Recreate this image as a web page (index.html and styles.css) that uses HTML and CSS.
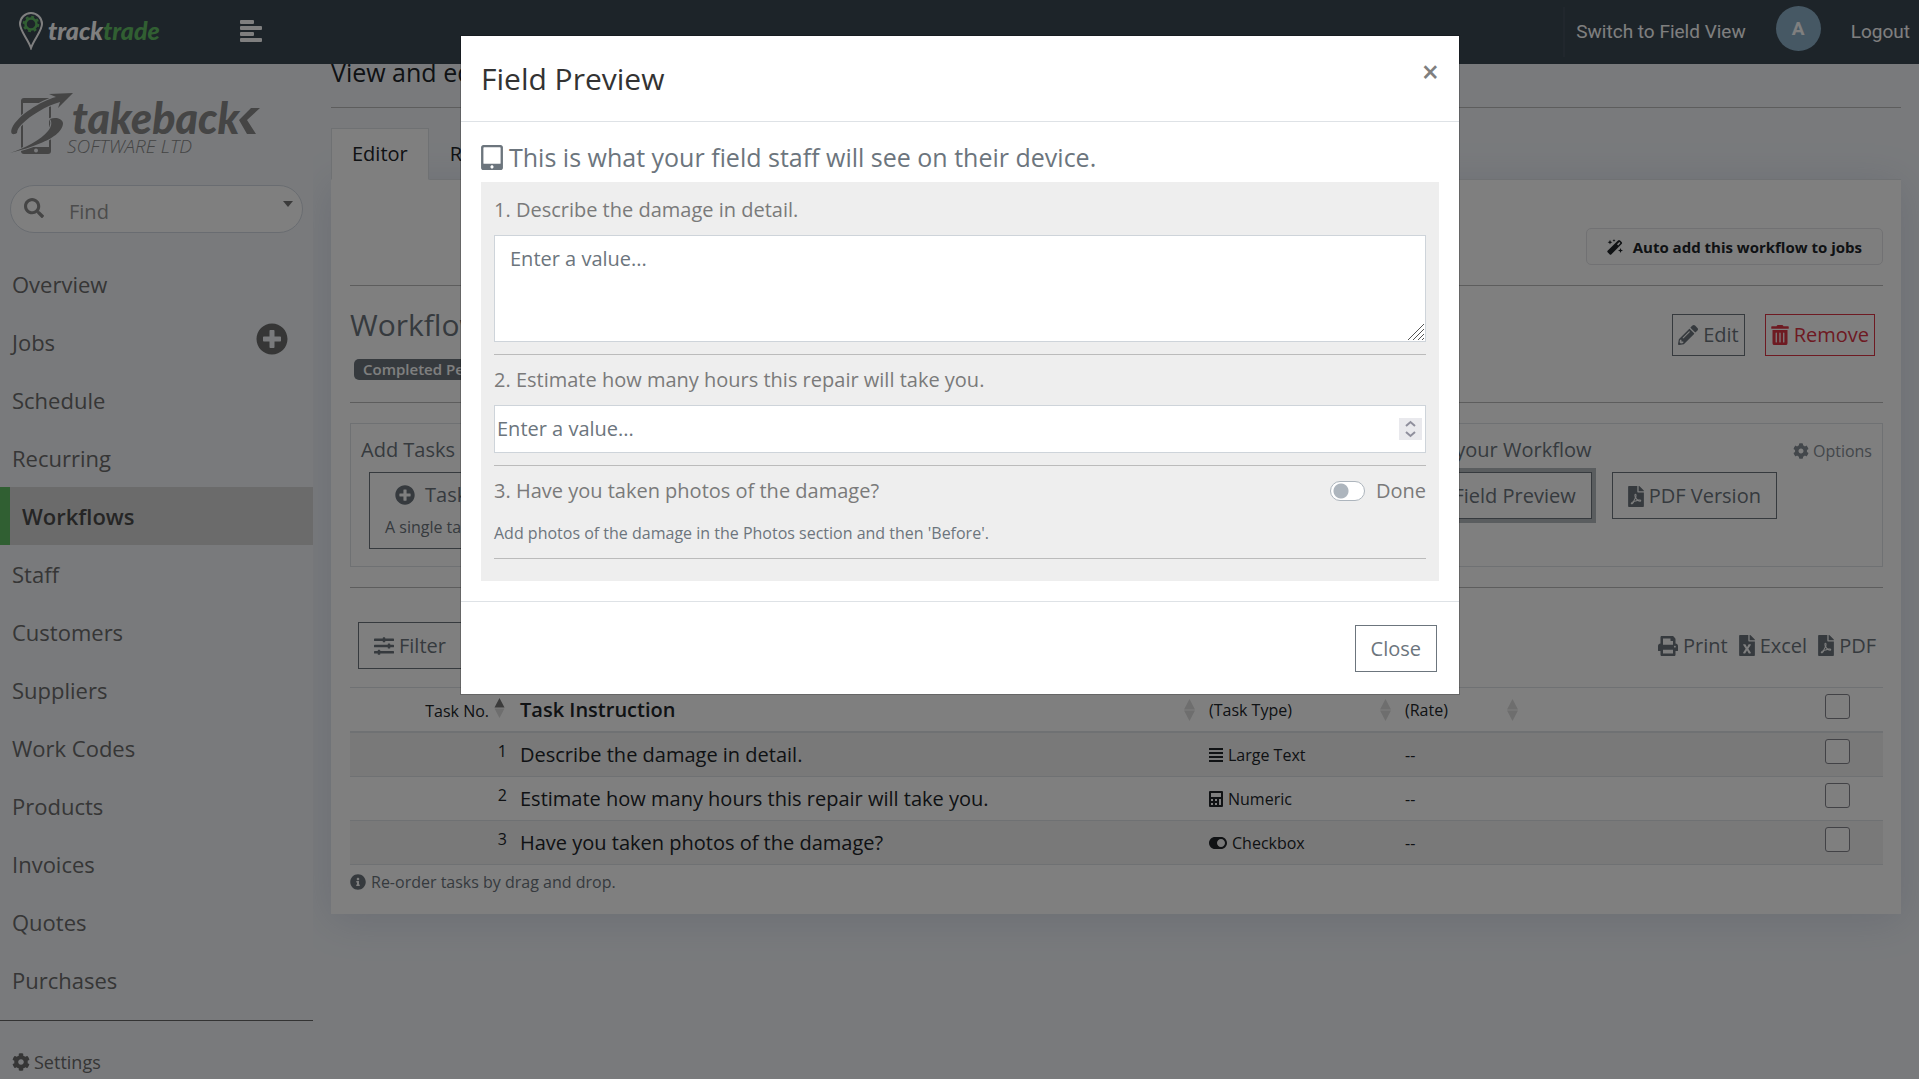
FILE: index.html
```html
<!DOCTYPE html>
<html lang="en">
  <head>
    <meta charset="UTF-8" />
    <meta name="viewport" content="width=device-width, initial-scale=1.0" />
    <title>Workflow - Tracktrade</title>
    <link rel="stylesheet" href="styles.css">
  </head>
  <body>
    <!-- Icon set -->
    <svg class="sprite" aria-hidden="true">
      <symbol id="i-search" viewBox="0 0 512 512"><path d="M505 442.7L405.3 343c-4.5-4.5-10.6-7-17-7H372c27.6-35.3 44-79.7 44-128C416 93.1 322.9 0 208 0S0 93.1 0 208s93.1 208 208 208c48.3 0 92.7-16.4 128-44v16.3c0 6.4 2.5 12.5 7 17l99.7 99.7c9.4 9.4 24.6 9.4 33.9 0l28.3-28.3c9.4-9.4 9.4-24.6.1-34zM208 336c-70.7 0-128-57.2-128-128 0-70.7 57.2-128 128-128 70.7 0 128 57.2 128 128 0 70.7-57.2 128-128 128z"/></symbol>
      <symbol id="i-plus" viewBox="0 0 512 512"><path d="M256 8C119 8 8 119 8 256s111 248 248 248 248-111 248-248S393 8 256 8zm144 276c0 6.600-5.400 12-12 12h-92v92c0 6.600-5.400 12-12 12h-56c-6.600 0-12-5.400-12-12v-92h-92c-6.600 0-12-5.400-12-12v-56c0-6.600 5.400-12 12-12h92v-92c0-6.600 5.400-12 12-12h56c6.600 0 12 5.400 12 12v92h92c6.600 0 12 5.400 12 12v56z"/></symbol>
      <symbol id="i-cog" viewBox="0 0 512 512"><path d="M487.400 315.700l-42.600-24.600c4.300-23.200 4.300-47 0-70.200l42.600-24.600c4.900-2.800 7.100-8.600 5.500-14-11.100-35.600-30-67.800-54.700-94.600-3.800-4.100-10-5.100-14.800-2.300L380.800 110c-17.900-15.400-38.500-27.300-60.800-35.100V25.800c0-5.600-3.900-10.500-9.400-11.700-36.700-8.200-74.300-7.800-109.200 0-5.500 1.200-9.400 6.100-9.400 11.700V75c-22.200 7.900-42.800 19.800-60.800 35.100L88.700 85.500c-4.900-2.800-11-1.900-14.800 2.300-24.700 26.700-43.600 58.900-54.700 94.600-1.700 5.400.6 11.200 5.500 14L67.300 221c-4.300 23.200-4.300 47 0 70.200l-42.600 24.600c-4.900 2.800-7.100 8.600-5.500 14 11.100 35.600 30 67.800 54.700 94.600 3.800 4.100 10 5.100 14.800 2.300l42.600-24.600c17.900 15.400 38.500 27.300 60.800 35.100v49.200c0 5.600 3.900 10.500 9.400 11.700 36.700 8.200 74.300 7.800 109.200 0 5.500-1.200 9.400-6.100 9.400-11.700v-49.200c22.200-7.900 42.800-19.800 60.800-35.100l42.600 24.600c4.900 2.800 11 1.900 14.800-2.300 24.700-26.700 43.600-58.900 54.700-94.600 1.500-5.500-.7-11.300-5.600-14.100zM256 336c-44.100 0-80-35.900-80-80s35.900-80 80-80 80 35.900 80 80-35.900 80-80 80z"/></symbol>
      <symbol id="i-pencil" viewBox="0 0 512 512"><path d="M497.900 142.100l-46.100 46.100c-4.700 4.700-12.300 4.700-17 0l-111-111c-4.700-4.700-4.700-12.300 0-17l46.100-46.100c18.700-18.700 49.100-18.700 67.900 0l60.100 60.100c18.800 18.700 18.800 49.100 0 67.900zM284.200 99.800L21.600 362.400.4 483.900c-2.900 16.400 11.400 30.600 27.800 27.800l121.500-21.300 262.600-262.600c4.700-4.700 4.700-12.300 0-17l-111-111c-4.800-4.700-12.400-4.700-17.100 0zM124.100 339.900c-5.500-5.500-5.500-14.300 0-19.800l154-154c5.500-5.500 14.300-5.500 19.800 0s5.500 14.300 0 19.800l-154 154c-5.500 5.500-14.300 5.500-19.800 0zM88 424h48v36.300l-64.500 11.300-31.100-31.100L51.700 376H88v48z"/></symbol>
      <symbol id="i-trash" viewBox="0 0 448 512"><path d="M32 464a48 48 0 0 0 48 48h288a48 48 0 0 0 48-48V128H32zm272-256a16 16 0 0 1 32 0v224a16 16 0 0 1-32 0zm-96 0a16 16 0 0 1 32 0v224a16 16 0 0 1-32 0zm-96 0a16 16 0 0 1 32 0v224a16 16 0 0 1-32 0zM432 32H312l-9.400-18.700A24 24 0 0 0 281.100 0H166.800a23.720 23.720 0 0 0-21.400 13.300L136 32H16A16 16 0 0 0 0 48v32a16 16 0 0 0 16 16h416a16 16 0 0 0 16-16V48a16 16 0 0 0-16-16z"/></symbol>
      <symbol id="i-pdf" viewBox="0 0 384 512"><path d="M181.900 256.100c-5-16-4.900-46.900-2-46.900 8.400 0 7.600 36.900 2 46.900zm-1.700 47.200c-7.700 20.200-17.300 43.300-28.400 62.700 18.300-7 39-17.200 62.900-21.900-12.700-9.600-24.900-23.400-34.500-40.800zM86.100 428.100c0 .8 13.200-5.400 34.900-40.200-6.700 6.300-29.100 24.500-34.900 40.200zM248 160h136v328c0 13.300-10.700 24-24 24H24c-13.300 0-24-10.700-24-24V24C0 10.700 10.700 0 24 0h200v136c0 13.200 10.800 24 24 24zm-8 171.800c-20-12.200-33.300-29-42.700-53.800 4.500-18.500 11.600-46.600 6.200-64.200-4.700-29.400-42.400-26.500-47.800-6.800-5 18.300-.4 44.100 8.100 77-11.600 27.600-28.700 64.600-40.800 85.800-.1 0-.1.1-.2.1-27.100 13.900-73.600 44.500-54.500 68 5.600 6.900 16 10 21.500 10 17.900 0 35.700-18 61.100-61.800 25.800-8.500 54.100-19.100 79-23.200 21.700 11.800 47.100 19.500 64 19.500 29.200 0 31.200-32 19.700-43.400-13.900-13.600-54.300-9.700-73.600-7.200zM377 105L279 7c-4.500-4.500-10.600-7-17-7h-6v128h128v-6.100c0-6.300-2.500-12.400-7-16.900zm-74.100 255.300c4.100-2.700-2.500-11.900-42.800-9 37.100 15.800 42.800 9 42.800 9z"/></symbol>
      <symbol id="i-excel" viewBox="0 0 384 512"><path d="M224 136V0H24C10.700 0 0 10.700 0 24v464c0 13.300 10.700 24 24 24h336c13.300 0 24-10.700 24-24V160H248c-13.200 0-24-10.800-24-24zm60.100 106.500L224 336l60.100 93.500c5.100 8-.6 18.500-10.100 18.500h-34.900c-4.400 0-8.500-2.400-10.600-6.300C208.900 405.500 192 373 192 373c-6.400 14.800-10 20-36.600 68.800-2.100 3.900-6.100 6.300-10.500 6.300H110c-9.500 0-15.200-10.500-10.100-18.500l60.300-93.500-60.300-93.500c-5.200-8 .6-18.500 10.100-18.500h34.800c4.400 0 8.500 2.400 10.600 6.300 26.100 48.800 20 33.600 36.600 68.500 0 0 6.100-11.700 36.600-68.500 2.100-3.900 6.200-6.300 10.600-6.300H274c9.500-.1 15.200 10.400 10.100 18.400zM384 121.900v6.100H256V0h6.100c6.400 0 12.500 2.500 17 7l97.900 98c4.500 4.500 7 10.600 7 16.900z"/></symbol>
      <symbol id="i-print" viewBox="0 0 512 512"><path d="M448 192V77.250c0-8.490-3.370-16.620-9.370-22.630L393.370 9.370c-6-6-14.140-9.370-22.630-9.370H96C78.330 0 64 14.330 64 32v160c-35.350 0-64 28.650-64 64v112c0 8.840 7.160 16 16 16h48v96c0 17.670 14.330 32 32 32h320c17.670 0 32-14.330 32-32v-96h48c8.840 0 16-7.160 16-16V256c0-35.350-28.650-64-64-64zm-64 256H128v-96h256v96zm0-224H128V64h192v48c0 8.840 7.160 16 16 16h48v96zm48 72c-13.250 0-24-10.750-24-24 0-13.260 10.750-24 24-24s24 10.740 24 24c0 13.250-10.750 24-24 24z"/></symbol>
      <symbol id="i-sliders" viewBox="0 0 512 512"><path d="M496 384H160v-16c0-8.800-7.200-16-16-16h-32c-8.800 0-16 7.200-16 16v16H16c-8.800 0-16 7.200-16 16v32c0 8.800 7.200 16 16 16h80v16c0 8.800 7.200 16 16 16h32c8.800 0 16-7.200 16-16v-16h336c8.800 0 16-7.200 16-16v-32c0-8.800-7.200-16-16-16zm0-160h-80v-16c0-8.800-7.200-16-16-16h-32c-8.800 0-16 7.200-16 16v16H16c-8.800 0-16 7.200-16 16v32c0 8.800 7.200 16 16 16h336v16c0 8.800 7.200 16 16 16h32c8.800 0 16-7.200 16-16v-16h80c8.800 0 16-7.200 16-16v-32c0-8.800-7.200-16-16-16zm0-160H288V48c0-8.800-7.200-16-16-16h-32c-8.800 0-16 7.200-16 16v16H16C7.200 64 0 71.200 0 80v32c0 8.800 7.200 16 16 16h208v16c0 8.800 7.200 16 16 16h32c8.800 0 16-7.200 16-16v-16h208c8.800 0 16-7.200 16-16V80c0-8.800-7.200-16-16-16z"/></symbol>
      <symbol id="i-info" viewBox="0 0 512 512"><path d="M256 8C119 8 8 119 8 256c0 137 111 248 248 248s248-111 248-248C504 119 393 8 256 8zm0 110c23.200 0 42 18.800 42 42s-18.800 42-42 42-42-18.800-42-42 18.800-42 42-42zm56 254c0 6.600-5.400 12-12 12h-88c-6.600 0-12-5.400-12-12v-24c0-6.600 5.400-12 12-12h12v-64h-12c-6.600 0-12-5.400-12-12v-24c0-6.600 5.400-12 12-12h64c6.600 0 12 5.400 12 12v100h12c6.600 0 12 5.400 12 12v24z"/></symbol>
      <symbol id="i-tablet" viewBox="0 0 448 512"><path d="M400 0H48C21.500 0 0 21.500 0 48v416c0 26.500 21.500 48 48 48h352c26.500 0 48-21.500 48-48V48c0-26.500-21.500-48-48-48zM224 480c-17.700 0-32-14.300-32-32s14.300-32 32-32 32 14.300 32 32-14.300 32-32 32zm176-108c0 6.600-5.400 12-12 12H60c-6.600 0-12-5.400-12-12V60c0-6.600 5.400-12 12-12h328c6.600 0 12 5.400 12 12v312z"/></symbol>
      <symbol id="i-toggle" viewBox="0 0 576 512"><path d="M384 64H192C86 64 0 150 0 256s86 192 192 192h192c106 0 192-86 192-192S490 64 384 64zm0 320c-70.800 0-128-57.300-128-128 0-70.800 57.300-128 128-128 70.800 0 128 57.300 128 128 0 70.800-57.300 128-128 128z"/></symbol>
      <symbol id="i-justify" viewBox="0 0 14 16"><path d="M0 1h14v2H0zM0 5h14v2H0zM0 9h14v2H0zM0 13h14v2H0z"/></symbol>
      <symbol id="i-calc" viewBox="0 0 14 16"><path fill-rule="evenodd" d="M1 0h12a1 1 0 0 1 1 1v14a1 1 0 0 1-1 1H1a1 1 0 0 1-1-1V1a1 1 0 0 1 1-1zM2 2v4h10V2zM2 8v2h2V8zM6 8v2h2V8zM10 8v6h2V8zM2 12v2h2v-2zM6 12v2h2v-2z"/></symbol>
      <symbol id="i-left" viewBox="0 0 22 22"><path d="M1 0h12a1 1 0 0 1 1 1v2a1 1 0 0 1-1 1H1a1 1 0 0 1-1-1V1a1 1 0 0 1 1-1zM1 6h20a1 1 0 0 1 1 1v2a1 1 0 0 1-1 1H1a1 1 0 0 1-1-1V7a1 1 0 0 1 1-1zM1 12h12a1 1 0 0 1 1 1v2a1 1 0 0 1-1 1H1a1 1 0 0 1-1-1v-2a1 1 0 0 1 1-1zM1 18h20a1 1 0 0 1 1 1v2a1 1 0 0 1-1 1H1a1 1 0 0 1-1-1v-2a1 1 0 0 1 1-1z"/></symbol>
      <symbol id="i-magic" viewBox="0 0 16 16"><path fill-rule="evenodd" d="M.6 11.800L11 1.400a1.500 1.500 0 0 1 2.100 0l1.500 1.500a1.500 1.500 0 0 1 0 2.100L4.200 15.400a1 1 0 0 1-1.400 0L.6 13.200a1 1 0 0 1 0-1.400zM10 5.200l1.200 1.200 2.200-2.500-1-1zM3 .8l.7 1.700 1.700.7-1.700.7L3 5.600l-.7-1.700L.6 3.200l1.700-.7zM13.500 9l.7 1.800 1.800.7-1.800.7-.7 1.800-.7-1.800-1.800-.7 1.800-.7zM7 0l.4 1.100 1.100.4-1.100.4L7 3l-.4-1.100-1.100-.4 1.100-.4z"/></symbol>
      <symbol id="i-sort" viewBox="0 0 11 22"><path class="sort-up" d="M5.500 0L11 10.500H0z"/><path class="sort-down" d="M0 11.500h11L5.500 22z"/></symbol>
    </svg>

    <header class="navbar">
      <a class="brand" href="#" aria-label="tracktrade">
        <svg class="brand-pin" viewBox="0 0 24 38">
          <path d="M12 36C9 27 1 19 1 12a11 11 0 0 1 22 0c0 7-8 15-11 24z" fill="none" stroke="#fff" stroke-width="2"/>
          <circle cx="12" cy="12" r="5.500" fill="none" stroke="#62be65" stroke-width="2.500"/>
          <circle cx="12" cy="12" r="7.300" fill="none" stroke="#62be65" stroke-width="2" stroke-dasharray="2.900 2.830"/>
        </svg>
        <span class="brand-name">track<span class="brand-green">trade</span></span>
      </a>
      <button class="menu-toggle" type="button" aria-label="Toggle menu"><svg class="icon"><use href="#i-left"/></svg></button>
      <nav class="navbar-right">
        <a class="switch-view" href="#">Switch to Field View</a>
        <span class="avatar">A</span>
        <a href="#">Logout</a>
      </nav>
    </header>

    <div class="layout">
      <aside class="sidebar">
        <svg class="company-logo" viewBox="0 0 252 64" role="img" aria-label="takeback software ltd">
          <!-- phone -->
          <path fill-rule="evenodd" d="M14 6h24a3 3 0 0 1 3 3v50a3 3 0 0 1-3 3H14a3 3 0 0 1-3-3V9a3 3 0 0 1 3-3zM13 11v44h26V11z"/>
          <circle class="logo-gap" cx="26" cy="58.500" r="2"/>
          <!-- arrows round it -->
          <path class="logo-edge" d="M63 1L39 2l7 3C31 9 8 23 2 36c-2 5 0 8 5 5 0-3 2-6 5-9 9-9 24-18 38-22l-2 6z"/>
          <path class="logo-edge" d="M0 61c15-5 31-13 38-22 4-5 4-9 2-12 5-2 12-1 13 4 0 9-12 16-22 20-9 4-20 7-31 10z"/>
          <text class="logo-name" x="62" y="42">takeback</text>
          <path d="M241 16h9L237 28l9 14h-9l-8-14z"/>
          <text class="logo-sub" x="57" y="61">SOFTWARE LTD</text>
        </svg>
        <div class="find">
          <svg class="icon icon-20"><use href="#i-search"/></svg>
          <input type="text" placeholder="Find" aria-label="Find">
          <span class="caret"></span>
        </div>
        <nav class="side-nav">
          <a href="#">Overview</a>
          <a href="#">Jobs <svg class="icon add-job"><use href="#i-plus"/></svg></a>
          <a href="#">Schedule</a>
          <a href="#">Recurring</a>
          <a href="#" class="active">Workflows</a>
          <a href="#">Staff</a>
          <a href="#">Customers</a>
          <a href="#">Suppliers</a>
          <a href="#">Work Codes</a>
          <a href="#">Products</a>
          <a href="#">Invoices</a>
          <a href="#">Quotes</a>
          <a href="#">Purchases</a>
        </nav>
        <a class="settings" href="#"><svg class="icon icon-18"><use href="#i-cog"/></svg>Settings</a>
      </aside>

      <main class="main">
        <h1 class="page-title">View and edit your workflow</h1>
        <hr>
        <div class="tabs">
          <a class="tab active" href="#">Editor</a>
          <a class="tab" href="#">Rules</a>
        </div>
        <section class="card">
          <div class="row-end">
            <button class="btn-auto" type="button"><svg class="icon icon-16"><use href="#i-magic"/></svg>Auto add this workflow to jobs</button>
          </div>
          <hr>
          <div class="workflow-head">
            <div>
              <h2>Workflow</h2>
              <span class="badge">Completed Per Job</span>
            </div>
            <div class="head-actions">
              <button class="btn btn-tight" type="button"><svg class="icon icon-20"><use href="#i-pencil"/></svg>Edit</button>
              <button class="btn btn-tight btn-danger" type="button"><svg class="icon trash"><use href="#i-trash"/></svg>Remove</button>
            </div>
          </div>
          <hr>
          <div class="panel">
            <div class="panel-tasks">
              <div>Add Tasks</div>
              <div class="panel-buttons">
                <button class="btn btn-task" type="button">
                  <span class="btn-line"><svg class="icon icon-20"><use href="#i-plus"/></svg>Task</span>
                  <small>A single task</small>
                </button>
              </div>
            </div>
            <div>
              <div>View your Workflow</div>
              <div class="panel-buttons">
                <button class="btn focused" type="button"><svg class="icon tablet-sm"><use href="#i-tablet"/></svg>Field Preview</button>
                <button class="btn" type="button"><svg class="icon file"><use href="#i-pdf"/></svg>PDF Version</button>
              </div>
            </div>
            <a class="options" href="#"><svg class="icon icon-16"><use href="#i-cog"/></svg>Options</a>
          </div>
          <hr>
          <div class="toolbar">
            <button class="btn" type="button"><svg class="icon icon-20"><use href="#i-sliders"/></svg>Filter</button>
            <div class="exports">
              <a href="#"><svg class="icon icon-20"><use href="#i-print"/></svg>Print</a>
              <a href="#"><svg class="icon file"><use href="#i-excel"/></svg>Excel</a>
              <a href="#"><svg class="icon file"><use href="#i-pdf"/></svg>PDF</a>
            </div>
          </div>
          <table class="tasks">
            <thead>
              <tr>
                <th class="col-no"><div class="th sorted">Task No. <svg class="sort"><use href="#i-sort"/></svg></div></th>
                <th class="col-name"><div class="th">Task Instruction <svg class="sort"><use href="#i-sort"/></svg></div></th>
                <th class="col-type"><div class="th">(Task Type) <svg class="sort"><use href="#i-sort"/></svg></div></th>
                <th class="col-rate"><div class="th">(Rate) <svg class="sort"><use href="#i-sort"/></svg></div></th>
                <th class="col-check"><input class="check" type="checkbox" aria-label="Select all"></th>
              </tr>
            </thead>
            <tbody>
              <tr>
                <td class="col-no">1</td>
                <td class="col-name">Describe the damage in detail.</td>
                <td><span class="type"><svg class="icon type-icon"><use href="#i-justify"/></svg>Large Text</span></td>
                <td>--</td>
                <td class="col-check"><input class="check" type="checkbox" aria-label="Select task 1"></td>
              </tr>
              <tr>
                <td class="col-no">2</td>
                <td class="col-name">Estimate how many hours this repair will take you.</td>
                <td><span class="type"><svg class="icon type-icon"><use href="#i-calc"/></svg>Numeric</span></td>
                <td>--</td>
                <td class="col-check"><input class="check" type="checkbox" aria-label="Select task 2"></td>
              </tr>
              <tr>
                <td class="col-no">3</td>
                <td class="col-name">Have you taken photos of the damage?</td>
                <td><span class="type"><svg class="icon icon-18"><use href="#i-toggle"/></svg>Checkbox</span></td>
                <td>--</td>
                <td class="col-check"><input class="check" type="checkbox" aria-label="Select task 3"></td>
              </tr>
            </tbody>
          </table>
          <p class="note"><svg class="icon icon-16"><use href="#i-info"/></svg>Re-order tasks by drag and drop.</p>
        </section>
      </main>
    </div>

    <!-- Field preview modal -->
    <div class="backdrop">
      <div class="modal" role="dialog" aria-modal="true" aria-labelledby="modalTitle">
        <div class="modal-header">
          <h2 id="modalTitle">Field Preview</h2>
          <button class="modal-x" type="button" aria-label="Dismiss">&times;</button>
        </div>
        <div class="modal-body">
          <h3><svg class="icon tablet"><use href="#i-tablet"/></svg>This is what your field staff will see on their device.</h3>
          <div class="preview">
            <label class="question" for="q1">1. Describe the damage in detail.</label>
            <div class="control">
              <textarea id="q1" placeholder="Enter a value..."></textarea>
              <svg class="grip" viewBox="0 0 18 18"><path d="M1 17L17 1M6 17L17 6M11 17l6-6M15 17l2-2"/></svg>
            </div>
            <hr>
            <label class="question" for="q2">2. Estimate how many hours this repair will take you.</label>
            <div class="control">
              <input id="q2" type="number" placeholder="Enter a value...">
              <svg class="spinner" viewBox="0 0 23 22"><path d="M7 8l4.500-4L16 8M7 14l4.500 4 4.500-4"/></svg>
            </div>
            <hr>
            <div class="question switch-row">
              <span>3. Have you taken photos of the damage?</span>
              <label><input class="switch" type="checkbox">Done</label>
            </div>
            <p class="hint">Add photos of the damage in the Photos section and then 'Before'.</p>
            <hr>
          </div>
        </div>
        <div class="modal-footer">
          <button class="btn" type="button">Close</button>
        </div>
      </div>
    </div>
  </body>
</html>
```
FILE: styles.css
```css
* {
  box-sizing: border-box;
}
body {
  margin: 0;
  min-height: 100vh;
  overflow: hidden; /* no page scroll while the modal is open */
  background: #f2f5f9;
  color: #212529;
  font: 20px/30px "Open Sans", sans-serif;
}
a {
  color: inherit;
  text-decoration: none;
}
h1,
h2,
h3,
p {
  margin: 0;
  font-weight: 400;
}
button,
input,
textarea {
  font: inherit;
}
hr {
  margin: 20px 0;
  border: 0;
  border-top: 1px solid #bbb;
}
.sprite {
  display: none;
}

/* Icons */
.icon {
  flex: none;
  fill: currentColor;
}
.icon-16 {
  width: 16px;
  height: 16px;
}
.icon-18 {
  width: 18px;
  height: 18px;
}
.icon-20 {
  width: 20px;
  height: 20px;
}
.file {
  width: 16px;
  height: 21px;
}
.trash {
  width: 18px;
  height: 20px;
}
.tablet {
  width: 22px;
  height: 25px;
}
.tablet-sm {
  width: 18px;
  height: 20px;
}

/* Navbar */
.navbar {
  position: fixed;
  top: 0;
  left: 0;
  right: 0;
  z-index: 10;
  display: flex;
  align-items: center;
  height: 64px;
  padding: 0 9px 2px 19px;
  background: #3a4853;
  color: #fff;
}
.brand {
  display: flex;
  align-items: center;
  gap: 5px;
  width: 221px;
}
.brand-pin {
  width: 24px;
  height: 38px;
}
.brand-name {
  padding-bottom: 2px;
  font: italic 900 25px/30px Lato, sans-serif;
}
.brand-green {
  color: #62be65;
}
.menu-toggle {
  padding: 0;
  border: 0;
  background: none;
  color: #fff;
  line-height: 0;
}
.menu-toggle .icon {
  width: 22px;
  height: 22px;
}
.navbar-right {
  display: flex;
  align-items: center;
  gap: 30px;
  margin-left: auto;
  padding-top: 2px;
  font-family: Roboto, sans-serif;
  font-size: 19px;
}
.switch-view {
  padding: 10px 0 10px 11px;
  border-left: 2px solid #434f5b;
}
.avatar {
  width: 45px;
  height: 45px;
  margin-bottom: 7px;
  border-radius: 50%;
  background: #8cb0c8;
  font-weight: 700;
  line-height: 45px;
  text-align: center;
}

/* Sidebar */
.layout {
  display: flex;
  min-height: 100vh;
}
.sidebar {
  position: relative;
  z-index: 1;
  flex: none;
  width: 313px;
  padding-top: 92px;
  background: #f2f5f9;
  color: #6c6c6c;
}
.company-logo {
  display: block;
  width: 252px;
  height: 64px;
  margin: 0 0 29px 10px;
  overflow: visible;
  fill: #8a8a8a;
}
.logo-gap {
  fill: #f2f5f9;
}
.logo-edge {
  stroke: #f2f5f9;
  stroke-width: 2;
  paint-order: stroke;
}
.logo-name {
  font: italic 900 43px Lato, sans-serif;
}
.logo-sub {
  font: italic 300 19px "Open Sans", sans-serif;
}
.find {
  display: flex;
  align-items: center;
  height: 48px;
  margin: 0 10px 22px;
  padding: 0 9px 0 13px;
  border: 1px solid #d3d9e2;
  border-radius: 24px;
  background: #fff;
  color: #8b8b8b;
}
.find .icon {
  margin-bottom: 2px;
}
.find input {
  flex: 1;
  min-width: 0;
  padding: 5px 0 0 25px;
  border: 0;
  background: none;
}
.find input::placeholder {
  color: #999;
}
.caret {
  margin-bottom: 10px;
  border: 5px solid transparent;
  border-top: 6px solid #777;
  border-bottom: 0;
}
.side-nav {
  padding-bottom: 11px;
  border-bottom: 1px solid #666;
  font-size: 22px;
}
.side-nav a {
  display: flex;
  align-items: center;
  justify-content: space-between;
  height: 58px;
  padding: 0 25px 0 12px;
}
.side-nav .active {
  border-left: 10px solid #60be64;
  background: #d6d6d6;
  color: #4a4a4a;
  font-weight: 600;
}
.add-job {
  width: 32px;
  height: 32px;
  margin-bottom: 6px;
}
.settings {
  display: flex;
  align-items: center;
  gap: 4px;
  padding: 26px 12px;
  font-size: 18px;
}

/* Main content */
.main {
  flex: 1;
  min-width: 0;
  padding: 57px 18px 0;
}
.page-title {
  font-size: 25px;
}
.tabs {
  display: flex;
}
.tabs::after {
  flex: 1;
  border-bottom: 1px solid #dee2e6;
  content: "";
}
.tab {
  padding: 10px 20px;
  border: 1px solid transparent;
  border-bottom-color: #dee2e6;
}
.tab.active {
  border-color: #dee2e6 #dee2e6 #fff;
  background: #fff;
}
.card {
  padding: 48px 18px 20px 19px;
  background: #fff;
  box-shadow: 0 5px 40px rgba(100, 120, 170, 0.2);
  color: #6c757d;
}
.row-end {
  display: flex;
  justify-content: flex-end;
}
.btn-auto {
  display: flex;
  align-items: center;
  gap: 10px;
  height: 37px;
  padding: 0 20px;
  border: 1px solid #e3e3e6;
  border-radius: 5px;
  background: #fcfcfc;
  color: #212529;
  font-size: 15px;
  font-weight: 700;
}
.workflow-head {
  display: flex;
  justify-content: space-between;
}
.workflow-head h2 {
  font-size: 30px;
  line-height: 38px;
}
.badge {
  display: block;
  width: max-content;
  margin: 15px 0 22px 4px;
  padding: 0 9px;
  border-radius: 5px;
  background: #6c757d;
  color: #fff;
  font-size: 15px;
  font-weight: 600;
  line-height: 21px;
}
.workflow-head + hr {
  margin-top: 0;
}
.head-actions {
  display: flex;
  align-items: flex-start;
  gap: 20px;
  padding: 8px 8px 0 0;
}
.btn {
  display: flex;
  align-items: center;
  gap: 5px;
  padding: 8px 15px 7px;
  border: 1px solid #6c757d;
  background: transparent;
  color: #6c757d;
}
.btn-tight {
  padding: 5px;
}
.btn-danger {
  border-color: #dc3545;
  color: #dc3545;
}
.panel {
  display: flex;
  padding: 11px 10px 17px 10px;
  border: 1px solid #dee2e6;
}
.panel-tasks {
  flex: 1;
}
.panel-buttons {
  display: flex;
  align-items: flex-start;
  gap: 20px;
  padding: 7px 0 0 8px;
}
.btn-task {
  flex-direction: column;
  align-items: flex-start;
  padding: 7px 15px 9px;
}
.btn-task small {
  font-size: 16px;
  line-height: 24px;
}
.btn-line {
  display: flex;
  align-items: center;
  gap: 10px;
  padding-left: 10px;
}
.focused {
  box-shadow: 0 0 0 4px rgba(108, 117, 125, 0.5);
}
.options {
  display: flex;
  align-items: center;
  gap: 4px;
  height: 32px;
  margin-left: 16px;
  color: #868e96;
  font-size: 16px;
}
.toolbar {
  display: flex;
  align-items: center;
  justify-content: space-between;
  padding: 14px 7px 18px 8px;
}
.exports {
  display: flex;
  gap: 11px;
}
.exports a {
  display: flex;
  align-items: center;
  gap: 5px;
}

/* Tasks table */
.tasks {
  width: 100%;
  border-collapse: separate;
  border-spacing: 0;
  border-top: 1px solid #dee2e6;
  table-layout: fixed;
  color: #212529;
  font-size: 16px;
}
.tasks th {
  height: 45px;
  padding: 0 4px 0 10px;
  border-bottom: 2px solid #dee2e6;
  font-weight: 400;
  text-align: left;
}
.tasks td {
  height: 44px;
  padding: 0 10px;
  border-bottom: 1px solid #dee2e6;
}
.tasks tbody tr:nth-child(odd) {
  background: #f2f2f2;
}
.tasks .col-no {
  width: 160px;
  padding-right: 3px;
  text-align: right;
}
.tasks th.col-no {
  padding-right: 5px;
}
.tasks td.col-no {
  padding-top: 6px;
  line-height: 24px;
  vertical-align: top;
}
.tasks .col-name {
  font-size: 20px;
}
.tasks th.col-name {
  font-weight: 600;
}
.tasks .col-type {
  width: 196px;
}
.tasks .col-rate {
  width: 127px;
}
.tasks .col-check {
  width: 361px;
  padding-right: 33px;
  line-height: 0;
  text-align: right;
}
.th {
  display: flex;
  align-items: center;
  justify-content: space-between;
}
.sort {
  width: 11px;
  height: 22px;
  fill: #dcdcdc;
}
.sorted {
  gap: 5px;
  justify-content: flex-end;
  padding-top: 3px;
}
.sorted .sort {
  height: 20px;
  margin-bottom: 6px;
}
.sorted .sort {
  --up: #777;
}
.sort-up {
  fill: var(--up, #dcdcdc);
}
.type {
  display: flex;
  align-items: center;
  gap: 5px;
}
.type-icon {
  width: 14px;
  height: 16px;
}
.check {
  width: 25px;
  height: 25px;
  margin: 0 0 6px;
  border: 1px solid #85858c;
  border-radius: 3px;
  background: #fff;
  appearance: none;
}
.note {
  display: flex;
  align-items: center;
  gap: 5px;
  padding-top: 5px;
  font-size: 16px;
  line-height: 24px;
}

/* Modal */
.backdrop {
  position: fixed;
  inset: 0;
  z-index: 20;
  display: flex;
  align-items: flex-start;
  justify-content: center;
  padding: 35px 0 0 1px;
  background: rgba(0, 0, 0, 0.5);
}
.modal {
  width: 1000px;
  max-width: 100%;
  border: 1px solid rgba(0, 0, 0, 0.2);
  background: #fff;
  background-clip: padding-box;
}
.modal-header {
  display: flex;
  align-items: flex-start;
  justify-content: space-between;
  padding: 20px;
  border-bottom: 1px solid #dee2e6;
}
.modal-header h2 {
  color: #333;
  font-size: 30px;
  line-height: 45px;
}
.modal-x {
  padding: 1px 0 0;
  border: 0;
  background: none;
  color: #7f7f7f;
  font-size: 30px;
  font-weight: 600;
}
.modal-body {
  padding: 20px;
  color: #6c757d;
}
.modal-body h3 {
  display: flex;
  align-items: center;
  gap: 6px;
  margin-bottom: 10px;
  font-size: 25px;
}
.preview {
  padding: 13px 13px 22px;
  background: #eee;
}
.preview hr {
  margin: 12px 0 10px;
}
.preview hr:last-child {
  margin-bottom: 0;
}
.question {
  display: block;
  margin-bottom: 10px;
  color: #7a7a7a;
}
.control {
  position: relative;
}
.control textarea,
.control input {
  display: block;
  width: 100%;
  border: 1px solid #ced4da;
  border-radius: 0;
  background: #fff;
}
.control textarea {
  height: 107px;
  padding: 8px 15px;
  resize: none;
}
.control input {
  height: 48px;
  padding: 0 2px 2px;
  appearance: textfield;
}
.control ::placeholder {
  color: #6c757d;
}
.grip {
  position: absolute;
  right: 1px;
  bottom: 1px;
  width: 18px;
  height: 18px;
  fill: none;
  stroke: #555;
}
.spinner {
  position: absolute;
  top: 13px;
  right: 4px;
  width: 23px;
  height: 22px;
  background: #e9e9ed;
  fill: none;
  stroke: #8f8f9d;
  stroke-width: 2;
}
.switch-row {
  display: flex;
  justify-content: space-between;
}
.switch-row label {
  display: flex;
  align-items: center;
  gap: 11px;
}
.switch {
  width: 35px;
  height: 20px;
  margin: 0;
  border: 1px solid #adb5bd;
  border-radius: 10px;
  background: radial-gradient(circle at 10px 9px, #adb5bd 7px, #fff 8px);
  appearance: none;
}
.hint {
  margin: 15px 0 13px;
  font-size: 16px;
  line-height: 24px;
}
.modal-footer {
  display: flex;
  justify-content: flex-end;
  padding: 23px 22px 22px;
  border-top: 1px solid #dee2e6;
}
```
